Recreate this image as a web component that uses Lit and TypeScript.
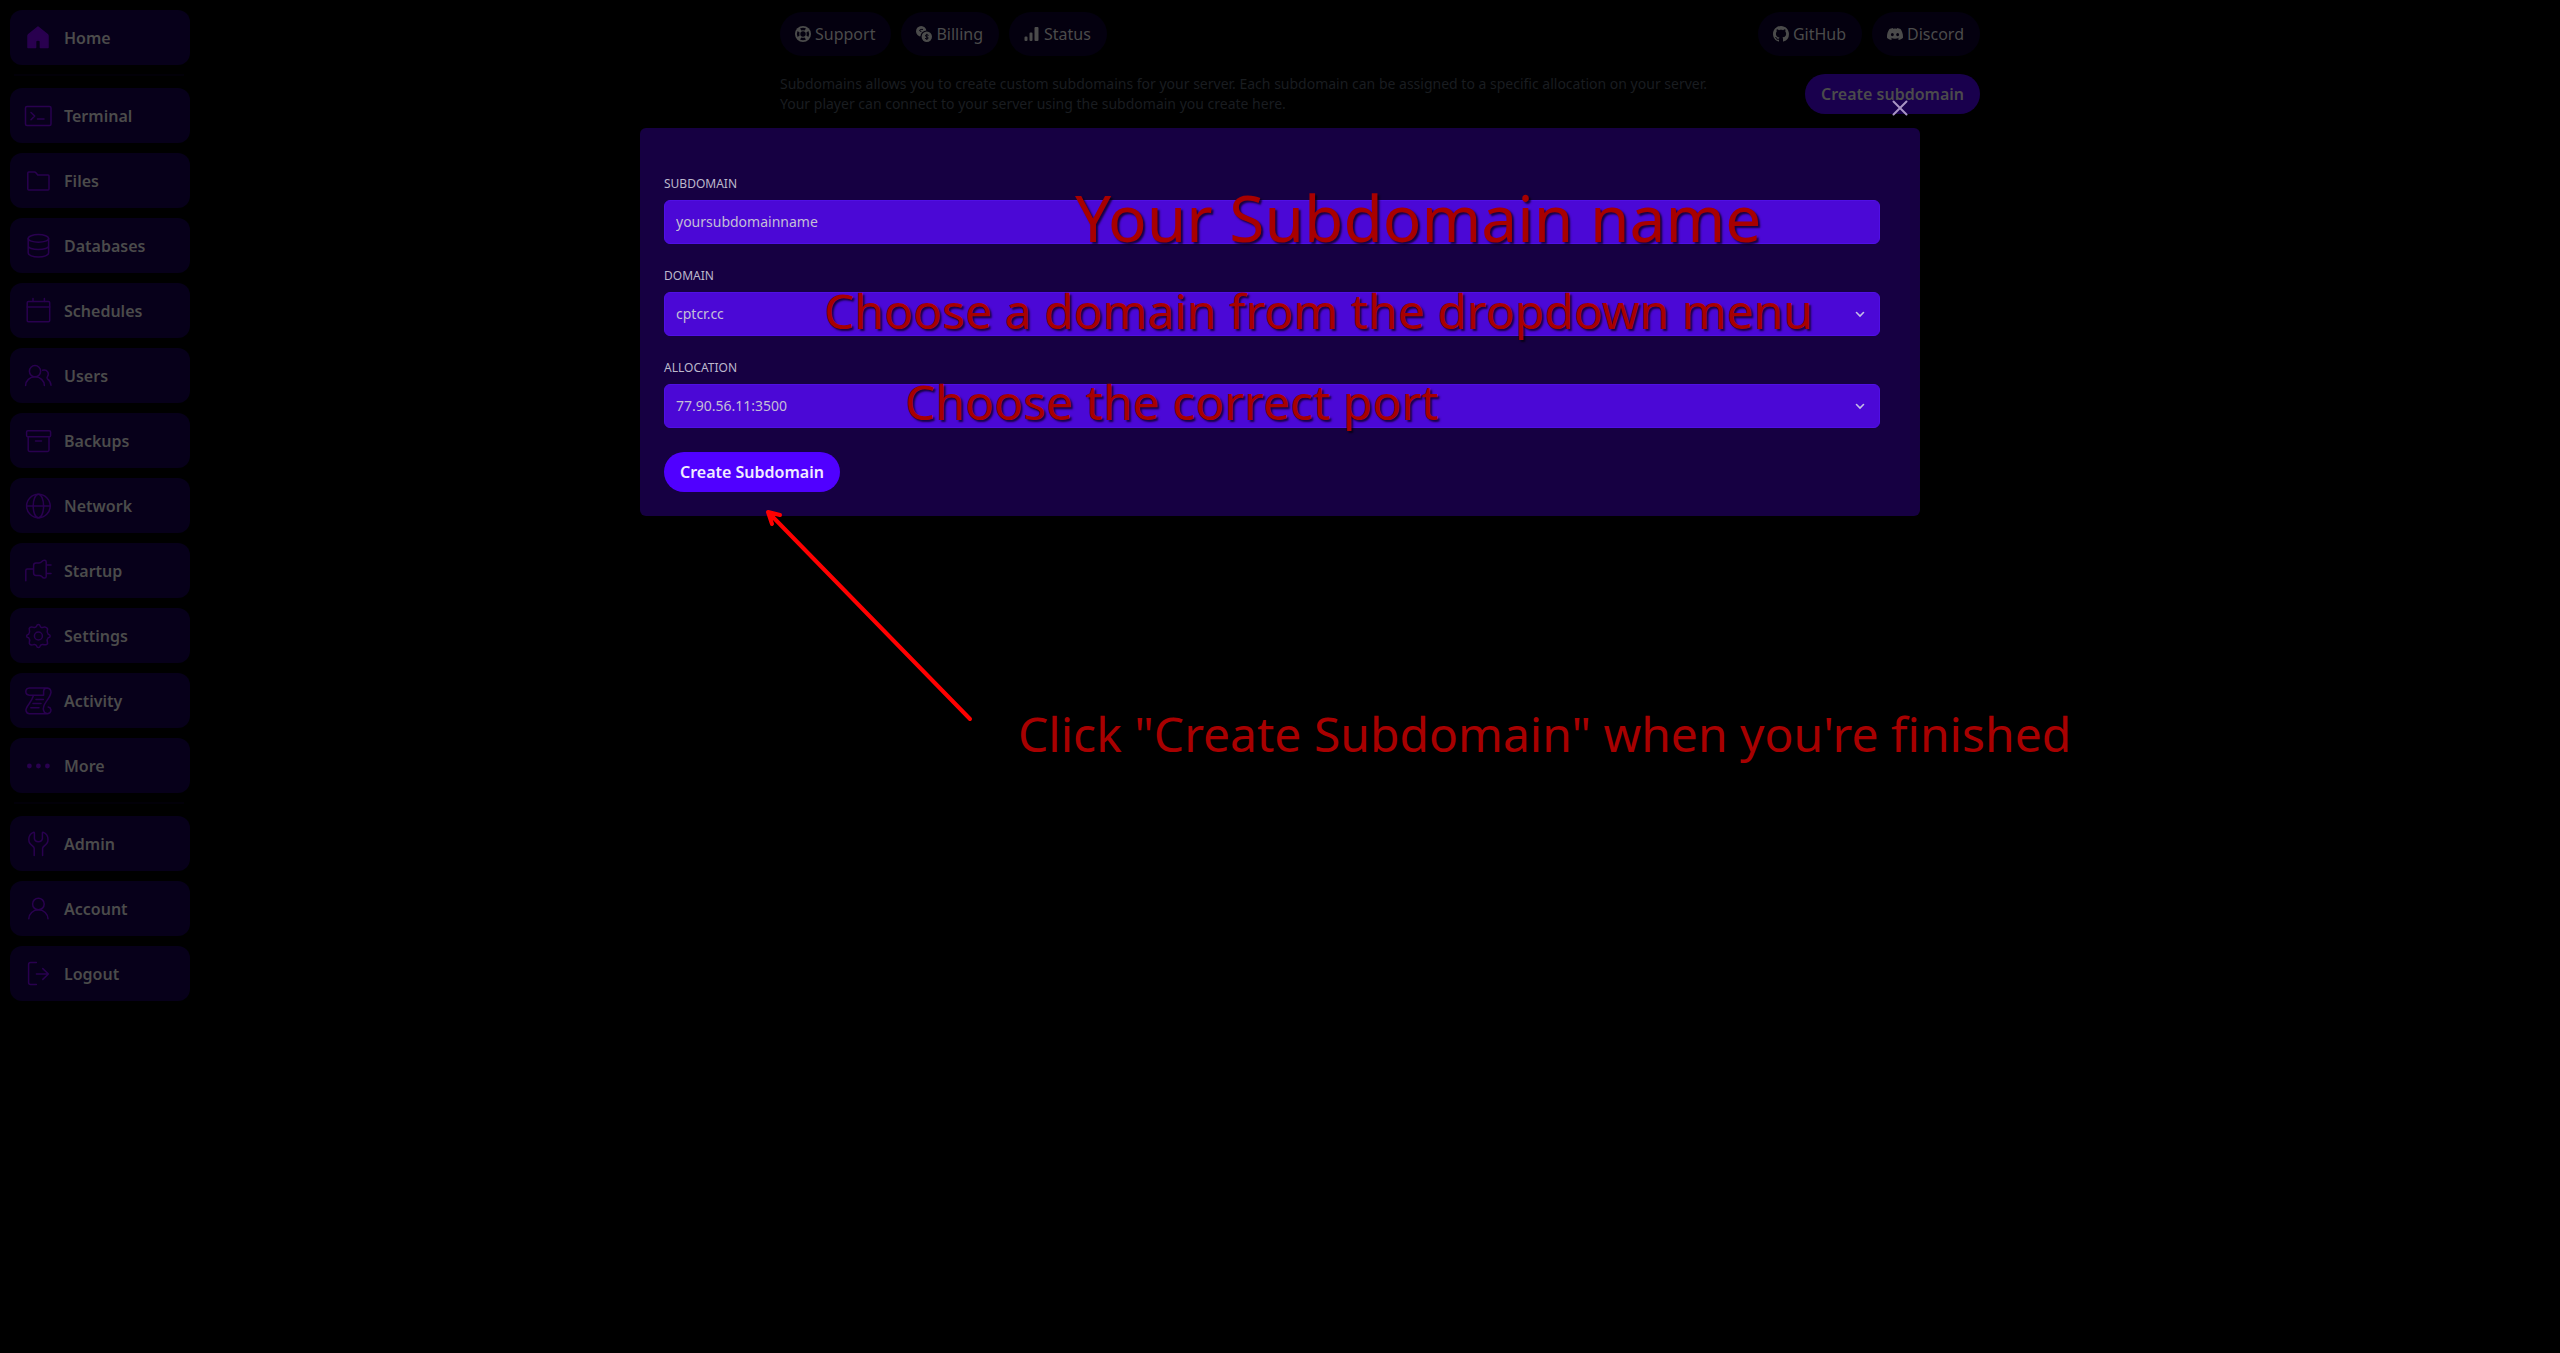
import { LitElement, html, css, svg, TemplateResult } from "lit";
import { customElement } from "lit/decorators.js";

type NavItem = { label: string; icon: TemplateResult };

const home: NavItem = {
  label: "Home",
  icon: svg`<path d="M14 3 4.6 10.6Q4 11.2 4 12V23.5H11.6V17.5Q11.6 16 14 16T16.4 17.5V23.5H24V12Q24 11.2 23.4 10.6Z" fill="currentColor" stroke-linejoin="round"/>`,
};

const serverItems: NavItem[] = [
  { label: "Terminal", icon: svg`<rect x="1.5" y="4.5" width="25.5" height="19" rx="1.5"/><path d="M7 10.5 10.7 14 7 17.7M13.5 17H20"/>` },
  { label: "Files", icon: svg`<path d="M3.8 22V6Q3.8 5 4.8 5H10.5Q11.3 5 11.9 5.7L13.8 8H24Q25 8 25 9V22Q25 23 24 23H4.8Q3.8 23 3.8 22Z"/>` },
  { label: "Databases", icon: svg`<ellipse cx="14.4" cy="6.4" rx="10.2" ry="3.8"/><path d="M4.2 6.4V21C4.2 23.2 8.8 25 14.4 25S24.6 23.2 24.6 21V6.4M4.2 14C4.2 16 8.8 17.6 14.4 17.6S24.6 16 24.6 14"/>` },
  { label: "Schedules", icon: svg`<rect x="3.2" y="4.5" width="22.5" height="20.3" rx="1.2"/><path d="M3.2 10H25.7M9 1.5V4.5M20.4 1.5V4.5"/>` },
  { label: "Users", icon: svg`<circle cx="11" cy="9.2" r="5.6"/><path d="M1.6 23.6A9.4 8.8 0 0 1 20.4 23.6M18.6 8.2C23.5 7.2 25.6 11.5 23.4 14.6Q22.6 15.8 23.4 16.8 26.6 19 27 23.2"/>` },
  { label: "Backups", icon: svg`<rect x="2.6" y="3.8" width="24" height="6" rx="1.3"/><path d="M4.2 10V23Q4.2 24.4 5.6 24.4H23.6Q25 24.4 25 23V10M11.5 14H17.5"/>` },
  { label: "Network", icon: svg`<circle cx="14.4" cy="14" r="11.8"/><ellipse cx="14.4" cy="14" rx="5.2" ry="11.8"/><path d="M2.6 14H26.2"/>` },
  { label: "Startup", icon: svg`<path d="M1.8 23.8V13.5Q1.8 12 3.3 12H9.6M9.6 8.5Q9.6 6 12 6H15Q16.6 6 17.6 4.8 18.8 3.3 20.5 3.3 22.2 3.3 22.2 5V19.4Q22.2 21 20.5 21 18.8 21 17.8 19.5 16.8 18.4 15.2 18.4H12Q9.6 18.4 9.6 16V8.5M22.2 8H27M22.2 16.5H27"/>` },
  { label: "Settings", icon: svg`<circle cx="14.4" cy="14" r="4"/><path d="M12.6 4.2Q13 2.4 14.4 2.4T16.2 4.2 19 5.4Q20.7 4.5 22 5.4 24.1 6.4 23.4 8.1 22.6 10.4 24.2 12.2 26.2 12.6 26.2 14T24.2 15.8Q22.6 17.6 23.4 19.9 24.1 21.6 22.8 22.4T19 22.6Q17 22.2 16.2 23.8 15.8 25.6 14.4 25.6T12.6 23.8Q11.8 22.2 9.8 22.6 7.1 23.5 6 22.4T5.4 19.9Q6.2 17.6 4.6 15.8 2.6 15.4 2.6 14T4.6 12.2Q6.2 10.4 5.4 8.1 4.7 6.4 6 5.4T9.8 5.4Q11.8 5.8 12.6 4.2Z"/>` },
  { label: "Activity", icon: svg`<path d="M23.4 .9H5.4Q1.8 1.2 1.8 4.6T5.4 8.2H19.6V4.6Q19.6 1 23.4 .9 27 1.4 27 5.4 26.4 9 22.4 14.4 18.4 20 19.6 23.4 20.4 26.8 23.4 26.8 27 26.2 27 22.8 26.6 20.4 24.2 20M9.6 8.2Q8.4 12 5 17 1.6 21.4 2 23.8 2.8 26.8 5.4 26.8H23.4M12 12.4H19.4M9 16.6H17M6.8 20.8H15"/>` },
  { label: "More", icon: svg`<g fill="currentColor" stroke="none"><circle cx="5.4" cy="14" r="2.4"/><circle cx="14.4" cy="14" r="2.4"/><circle cx="23.4" cy="14" r="2.4"/></g>` },
];

const accountItems: NavItem[] = [
  { label: "Admin", icon: svg`<path d="M10.2 25.6V18.6Q10.2 17 8.6 16 4.8 13.6 4.8 9.6 4.8 4.4 9.4 2.4 10.4 2 10.4 3.2V8.6Q10.8 11.6 14.4 11.8 18 11.6 18.4 8.6V3.2Q18.4 2 19.4 2.4 24 4.4 24 9.6 24 13.6 20.2 16 18.6 17 18.6 18.6V25.6"/>` },
  { label: "Account", icon: svg`<circle cx="14.4" cy="9" r="5.8"/><path d="M4.8 23.8A9.6 9 0 0 1 24 23.8"/>` },
  { label: "Logout", icon: svg`<path d="M12.4 2.6H6.6Q4.6 2.6 4.6 4.6V22.4Q4.6 24.4 6.6 24.4H12.4M12.4 14H24.4M18.8 8.6 24.4 14 18.8 19.4"/>` },
];

const supportIcon = svg`<circle cx="8" cy="8" r="8" fill="currentColor"/><circle cx="8" cy="8" r="2.7" fill="#04000f"/><path d="M5 2.6Q8 1 11 2.6L9.6 4.6Q8 4 6.4 4.6ZM5 13.4Q8 15 11 13.4L9.6 11.4Q8 12 6.4 11.4ZM2.6 5Q1 8 2.6 11L4.6 9.6Q4 8 4.6 6.4ZM13.4 5Q15 8 13.4 11L11.4 9.6Q12 8 11.4 6.4Z" fill="#04000f"/>`;
const billingIcon = svg`<circle cx="5.2" cy="5.2" r="5.2" fill="currentColor"/><path d="M7 3.4H4.8Q3.4 3.6 3.8 5L5.4 5.6" fill="none" stroke="#04000f"/><circle cx="10.6" cy="10.6" r="6.2" fill="#04000f"/><circle cx="10.8" cy="10.8" r="5.2" fill="currentColor"/><path d="M12.6 9.4Q10.8 8.2 9.6 9.2 9 10.4 10.8 10.8T12 12.6Q10.8 13.4 9 12.4M10.8 7.8V13.8" fill="none" stroke="#04000f"/>`;
const statusIcon = svg`<path d="M.5 11.5a1 1 0 0 1 1-1h1a1 1 0 0 1 1 1V14a1 1 0 0 1-1 1h-1a1 1 0 0 1-1-1ZM5.5 7.5a1 1 0 0 1 1-1h1a1 1 0 0 1 1 1V14a1 1 0 0 1-1 1h-1a1 1 0 0 1-1-1ZM10.5 2a1 1 0 0 1 1-1h2a1 1 0 0 1 1 1v12a1 1 0 0 1-1 1h-2a1 1 0 0 1-1-1Z" fill="currentColor"/>`;
const githubIcon = svg`<path fill="currentColor" d="M8 0C3.58 0 0 3.58 0 8c0 3.54 2.29 6.53 5.47 7.59.4.07.55-.17.55-.38 0-.19-.01-.82-.01-1.49-2.01.37-2.53-.49-2.69-.94-.09-.23-.48-.94-.82-1.13-.28-.15-.68-.52-.01-.53.63-.01 1.08.58 1.23.82.72 1.21 1.87.87 2.33.66.07-.52.28-.87.51-1.07-1.78-.2-3.64-.89-3.64-3.95 0-.87.31-1.59.82-2.15-.08-.2-.36-1.02.08-2.12 0 0 .67-.21 2.2.82.64-.18 1.32-.27 2-.27s1.36.09 2 .27c1.53-1.04 2.2-.82 2.2-.82.44 1.1.16 1.92.08 2.12.51.56.82 1.27.82 2.15 0 3.07-1.87 3.75-3.65 3.95.29.25.54.73.54 1.48 0 1.07-.01 1.93-.01 2.2 0 .21.15.46.55.38A8.01 8.01 0 0 0 16 8c0-4.42-3.58-8-8-8Z"/>`;
const discordIcon = svg`<path fill="currentColor" d="M13.545 2.907a13.2 13.2 0 0 0-3.257-1.011.05.05 0 0 0-.052.025c-.141.25-.297.577-.406.833a12.2 12.2 0 0 0-3.658 0 8 8 0 0 0-.412-.833.05.05 0 0 0-.052-.025c-1.125.194-2.22.534-3.257 1.011a.04.04 0 0 0-.021.018C.356 6.024-.213 9.047.066 12.032q.003.022.021.037a13.3 13.3 0 0 0 3.995 2.02.05.05 0 0 0 .056-.019q.463-.63.818-1.329a.05.05 0 0 0-.01-.059l-.018-.011a9 9 0 0 1-1.248-.595.05.05 0 0 1-.02-.066l.015-.019q.127-.095.248-.195a.05.05 0 0 1 .051-.007c2.619 1.196 5.454 1.196 8.041 0a.05.05 0 0 1 .053.007q.121.1.248.195a.05.05 0 0 1-.004.085 8 8 0 0 1-1.249.594.05.05 0 0 0-.03.03.05.05 0 0 0 .003.041c.24.465.515.909.817 1.329a.05.05 0 0 0 .056.019 13.2 13.2 0 0 0 4.001-2.02.05.05 0 0 0 .021-.037c.334-3.451-.559-6.449-2.366-9.106a.03.03 0 0 0-.02-.019m-8.198 7.307c-.789 0-1.438-.724-1.438-1.612s.637-1.613 1.438-1.613c.807 0 1.45.73 1.438 1.613 0 .888-.637 1.612-1.438 1.612m5.316 0c-.788 0-1.438-.724-1.438-1.612s.637-1.613 1.438-1.613c.807 0 1.451.73 1.438 1.613 0 .888-.631 1.612-1.438 1.612"/>`;

@customElement("app-root")
export class AppRoot extends LitElement {
  static styles = css`
    :host {
      display: block;
      min-height: 100vh;
      background: #000;
      color: #4b4b4b;
      font: 16px/24px "Noto Sans", sans-serif;
    }
    * { box-sizing: border-box; }
    button, input, select { font: inherit; color: inherit; border: 0; margin: 0; }
    a { color: inherit; text-decoration: none; }
    .page { display: grid; grid-template-columns: 200px minmax(0, 1fr); }
    .sidebar { padding: 10px; }
    .group { display: flex; flex-direction: column; gap: 10px; }
    .group + .group { margin-top: 9px; padding-top: 14px; position: relative; }
    .group + .group::before {
      content: "";
      position: absolute;
      top: 0;
      left: 4px;
      right: 6px;
      height: 2px;
      background: #020008;
    }
    .nav {
      display: flex;
      align-items: center;
      gap: 12px;
      height: 55px;
      padding: 0 14px;
      border-radius: 12px;
      background: #07001a;
      font-weight: 600;
    }
    .nav svg {
      width: 28px;
      height: 28px;
      flex: none;
      color: #29004f;
      fill: none;
      stroke: currentColor;
      stroke-width: 1.5;
      stroke-linecap: round;
      stroke-linejoin: round;
    }
    .content { width: 100%; max-width: 1200px; margin: 0 auto; padding-top: 12px; }
    .bar { display: flex; gap: 10px; }
    .spacer { flex: 1; }
    .pill {
      display: flex;
      align-items: center;
      gap: 4px;
      height: 44px;
      padding: 0 16px 0 15px;
      border-radius: 22px;
      background: #04000f;
    }
    .pill svg { width: 16px; height: 16px; }
    .intro { display: flex; justify-content: space-between; align-items: flex-start; margin-top: 18px; }
    .intro p { margin: 0; color: #1a1d20; font-size: 14px; line-height: 20px; }
    .action {
      height: 40px;
      padding: 0 16px;
      border-radius: 20px;
      background: #19004d;
      font-weight: 600;
      white-space: nowrap;
    }
    .overlay { position: absolute; inset: 0; padding-top: 128px; }
    .modal {
      position: relative;
      width: 50%;
      margin: 0 auto;
      padding: 48px 40px 24px 24px;
      border-radius: 6px;
      background: #160042;
      color: #c4bfd6;
    }
    .close {
      position: absolute;
      top: -32px;
      right: 8px;
      width: 24px;
      height: 24px;
      padding: 0;
      background: none;
      color: #a894c4;
    }
    .close svg { display: block; width: 24px; height: 24px; }
    .field { margin-bottom: 24px; }
    .field label { display: block; margin-bottom: 8px; font-size: 12px; line-height: 16px; text-transform: uppercase; color: #bcb8cc; }
    .control { position: relative; }
    .control input, .control select {
      display: block;
      width: 100%;
      height: 44px;
      padding: 0 11px;
      border: 1px solid #5010e4;
      border-radius: 6px;
      background: #4b08d6;
      font-size: 14px;
      line-height: 20px;
      appearance: none;
    }
    .control input { padding-bottom: 2px; }
    .chevron { position: absolute; right: 12px; top: 14px; width: 16px; height: 16px; pointer-events: none; }
    .modal .action { background: #5000ff; color: #f1ebff; }
    .note { position: absolute; color: #a80000; font-size: 48px; line-height: 60px; white-space: nowrap; pointer-events: none; }
    .shadow { text-shadow: 2px 2px 2px rgba(0, 0, 0, 0.7); }
    .name { left: 411px; top: -22px; font-size: 64px; line-height: 80px; }
    .domain { left: 160px; top: -11px; }
    .port { left: 241px; top: -12px; }
    .finish { left: 378px; top: 576px; }
    .arrow { position: absolute; left: 124px; top: 378px; width: 212px; height: 220px; pointer-events: none; }
  `;

  private nav(items: NavItem[]) {
    return html`<div class="group">
      ${items.map((i) => html`<a class="nav" href="#"><svg viewBox="0 0 28 28" aria-hidden="true">${i.icon}</svg>${i.label}</a>`)}
    </div>`;
  }

  private pill(label: string, icon: TemplateResult) {
    return html`<a class="pill" href="#"><svg viewBox="0 0 16 16" aria-hidden="true">${icon}</svg>${label}</a>`;
  }

  private select(id: string, value: string) {
    return html`<select id=${id}><option>${value}</option></select>
      <svg class="chevron" viewBox="0 0 16 16" aria-hidden="true"><path d="M4.5 6.5 8 10l3.5-3.5" fill="none" stroke="#c4bfe6" stroke-width="1.6" stroke-linecap="round"/></svg>`;
  }

  render() {
    return html`
      <div class="page">
        <nav class="sidebar">${this.nav([home])}${this.nav(serverItems)}${this.nav(accountItems)}</nav>
        <main class="content">
          <div class="bar">
            ${this.pill("Support", supportIcon)}${this.pill("Billing", billingIcon)}${this.pill("Status", statusIcon)}
            <span class="spacer"></span>
            ${this.pill("GitHub", githubIcon)}${this.pill("Discord", discordIcon)}
          </div>
          <div class="intro">
            <p>
              Subdomains allows you to create custom subdomains for your server. Each subdomain can be assigned to a specific allocation on your server.<br />
              Your player can connect to your server using the subdomain you create here.
            </p>
            <button class="action" type="button">Create subdomain</button>
          </div>
        </main>
      </div>
      <div class="overlay">
        <form class="modal" role="dialog" aria-label="Create Subdomain">
          <button class="close" type="button" aria-label="Close">
            <svg viewBox="0 0 24 24"><path d="M5.5 5.5l13 13M18.5 5.5l-13 13" stroke="currentColor" stroke-width="2" stroke-linecap="round"/></svg>
          </button>
          <div class="field">
            <label for="subdomain">Subdomain</label>
            <div class="control">
              <input id="subdomain" type="text" value="yoursubdomainname" />
              <span class="note shadow name">Your Subdomain name</span>
            </div>
          </div>
          <div class="field">
            <label for="domain">Domain</label>
            <div class="control">
              ${this.select("domain", "cptcr.cc")}
              <span class="note shadow domain">Choose a domain from the dropdown menu</span>
            </div>
          </div>
          <div class="field">
            <label for="allocation">Allocation</label>
            <div class="control">
              ${this.select("allocation", "77.90.56.11:3500")}
              <span class="note shadow port">Choose the correct port</span>
            </div>
          </div>
          <button class="action" type="button">Create Subdomain</button>
          <svg class="arrow" viewBox="0 0 212 220" aria-hidden="true"><path d="M206 213 4 6M16 9 4 6 8 18" fill="none" stroke="#f00" stroke-width="4" stroke-linecap="round" stroke-linejoin="round"/></svg>
          <span class="note finish">Click "Create Subdomain" when you're finished</span>
        </form>
      </div>
    `;
  }
}
